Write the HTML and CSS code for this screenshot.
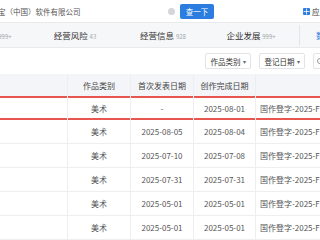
FILE: index.html
```html
<!DOCTYPE html>
<html lang="zh-CN">
<head>
    <meta charset="UTF-8">
    <title>作品著作权</title>
    <link rel="stylesheet" href="styles.css">
</head>
<body>
    <div class="page">
        <div class="topbar">
            <span class="search-text">宝（中国）软件有限公司</span>
            <span class="clear"></span>
            <button class="search-btn">查一下</button>
            <div class="top-link">
                <svg width="7" height="7" viewBox="0 0 7 7"><rect width="7" height="7" rx="1" fill="#2b7de0"/><path d="M3.5 0.5v6M0.5 3.5h6" stroke="#fff" stroke-width="0.8"/></svg>
                <span>应用</span>
            </div>
        </div>

        <div class="tabs">
            <div class="tab">知识产权 <span class="count">999+</span></div>
            <div class="tab">经营风险 <span class="count">43</span></div>
            <div class="tab">经营信息 <span class="count">928</span></div>
            <div class="tab">企业发展 <span class="count">999+</span></div>
            <div class="tab-divider"></div>
            <div class="tab-more">数据</div>
        </div>

        <div class="filters">
            <div class="filter-btn">作品类别 <span class="caret">▾</span></div>
            <div class="filter-btn">登记日期 <span class="caret">▾</span></div>
            <div class="filter-search"><span class="search-icon"></span></div>
        </div>

        <div class="table">
            <div class="row head">
                <div class="cell"></div>
                <div class="cell">作品类别</div>
                <div class="cell">首次发表日期</div>
                <div class="cell">创作完成日期</div>
                <div class="cell left"></div>
            </div>
            <div class="row active">
                <div class="cell"></div>
                <div class="cell">美术</div>
                <div class="cell">-</div>
                <div class="cell">2025-08-01</div>
                <div class="cell left">国作登字-2025-F-00</div>
            </div>
            <div class="row">
                <div class="cell"></div>
                <div class="cell">美术</div>
                <div class="cell">2025-08-05</div>
                <div class="cell">2025-08-04</div>
                <div class="cell left">国作登字-2025-F-00</div>
            </div>
            <div class="row">
                <div class="cell"></div>
                <div class="cell">美术</div>
                <div class="cell">2025-07-10</div>
                <div class="cell">2025-07-08</div>
                <div class="cell left">国作登字-2025-F-00</div>
            </div>
            <div class="row">
                <div class="cell"></div>
                <div class="cell">美术</div>
                <div class="cell">2025-07-31</div>
                <div class="cell">2025-07-31</div>
                <div class="cell left">国作登字-2025-F-00</div>
            </div>
            <div class="row">
                <div class="cell"></div>
                <div class="cell">美术</div>
                <div class="cell">2025-05-01</div>
                <div class="cell">2025-05-01</div>
                <div class="cell left">国作登字-2025-F-00</div>
            </div>
            <div class="row">
                <div class="cell"></div>
                <div class="cell">美术</div>
                <div class="cell">2025-05-01</div>
                <div class="cell">2025-05-01</div>
                <div class="cell left">国作登字-2025-F-00</div>
            </div>
        </div>
    </div>
</body>
</html>
```

FILE: styles.css
```css
* {
    margin: 0;
    padding: 0;
    box-sizing: border-box;
}

body {
    font-family: "Noto Sans CJK SC", "Noto Sans", sans-serif;
    background: #fff;
    color: #555;
    overflow: hidden;
    width: 320px;
    height: 240px;
}

.page {
    width: 320px;
    overflow: hidden;
}

.topbar {
    display: flex;
    align-items: center;
    height: 23px;
    border-bottom: 1px solid #e9eaec;
    white-space: nowrap;
}

.search-text {
    width: 170px;
    flex-shrink: 0;
    margin-left: -2px;
    font-size: 7.5px;
    color: #555;
}

.clear {
    width: 7px;
    height: 7px;
    border-radius: 50%;
    background: #d4d6da;
    flex-shrink: 0;
}

.search-btn {
    margin-left: 5px;
    width: 34px;
    height: 15px;
    border: none;
    border-radius: 2px;
    background: #2b7de0;
    color: #fff;
    font-family: inherit;
    font-size: 7.5px;
    flex-shrink: 0;
}

.top-link {
    display: flex;
    align-items: center;
    gap: 2px;
    margin-left: 89px;
    font-size: 7.5px;
    color: #333;
    flex-shrink: 0;
}

.tabs {
    display: flex;
    align-items: center;
    height: 25px;
    background: #f6f7f9;
    border-bottom: 1px solid #e9eaec;
    white-space: nowrap;
}

.tab {
    width: 88px;
    flex-shrink: 0;
    text-align: center;
    font-size: 8.5px;
    color: #333;
}

.tab:first-child {
    margin-left: -57px;
}

.count {
    font-size: 6px;
    color: #a0a4aa;
}

.tab-divider {
    width: 1px;
    height: 21px;
    margin-left: 4px;
    background: #e3e5e8;
    flex-shrink: 0;
}

.tab-more {
    margin-left: 16px;
    font-size: 8.5px;
    color: #2b7de0;
    flex-shrink: 0;
}

.filters {
    display: flex;
    align-items: center;
    gap: 8px;
    height: 26px;
    padding-left: 205px;
    white-space: nowrap;
}

.filter-btn {
    width: 46px;
    height: 16px;
    flex-shrink: 0;
    border: 1px solid #e1e3e6;
    border-radius: 2px;
    font-size: 7.5px;
    color: #333;
    display: flex;
    align-items: center;
    justify-content: center;
    gap: 2px;
}

.caret {
    font-size: 6px;
    color: #666;
}

.filter-search {
    width: 60px;
    height: 16px;
    flex-shrink: 0;
    border: 1px solid #e1e3e6;
    border-radius: 2px;
    padding-left: 3px;
    display: flex;
    align-items: center;
}

.search-icon {
    width: 6px;
    height: 6px;
    border: 1px solid #999;
    border-radius: 50%;
}

.table {
    width: 360px;
}

.row {
    display: grid;
    grid-template-columns: 68px 63px 63px 62px 104px;
    height: 24px;
    border-bottom: 1px solid #eceef1;
    font-size: 8px;
    white-space: nowrap;
}

.row.head {
    height: 22px;
    background: #f3f5f8;
    color: #444;
    border-bottom: none;
}

.row.active {
    box-shadow: inset 0 2px #e8564f, inset 0 -2px #e8564f;
    border-bottom: none;
}

.cell {
    display: flex;
    align-items: center;
    justify-content: center;
    border-right: 1px solid #eceef1;
    overflow: hidden;
}

.cell.left {
    justify-content: flex-start;
    padding-left: 4px;
}
```
